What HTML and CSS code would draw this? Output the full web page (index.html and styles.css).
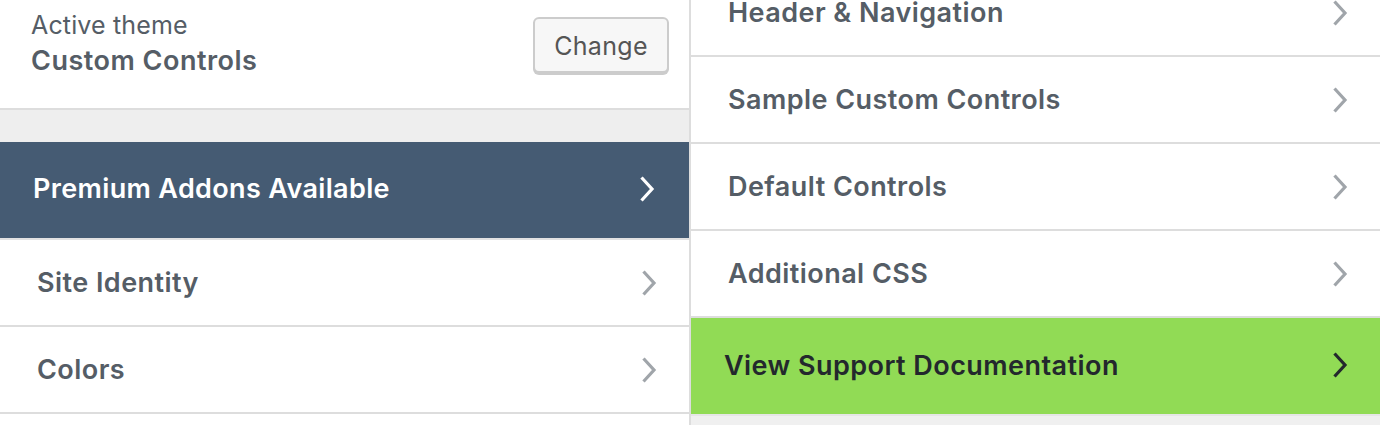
FILE: index.html
```html
<!DOCTYPE html>
<html lang="en">
<head>
<meta charset="utf-8">
<title>Customizer</title>
<link rel="stylesheet" href="styles.css">
</head>
<body>
<div class="screen">
  <div class="panel panel-left">
    <div class="theme">
      <div class="theme-info">
        <span class="theme-label">Active theme</span>
        <strong class="theme-name">Custom Controls</strong>
      </div>
      <button class="change-btn" type="button">Change</button>
    </div>
    <div class="spacer"></div>
    <ul class="sections">
      <li class="section section-premium">
        <span class="section-title">Premium Addons Available</span>
        <svg class="chev" width="18" height="28" viewBox="0 0 18 28"><polyline points="3.5,2.5 14,14 3.5,25.5" fill="none" stroke="currentColor" stroke-width="3.2"/></svg>
      </li>
      <li class="section">
        <span class="section-title">Site Identity</span>
        <svg class="chev" width="18" height="28" viewBox="0 0 18 28"><polyline points="3.5,2.5 14,14 3.5,25.5" fill="none" stroke="currentColor" stroke-width="3.2"/></svg>
      </li>
      <li class="section">
        <span class="section-title">Colors</span>
        <svg class="chev" width="18" height="28" viewBox="0 0 18 28"><polyline points="3.5,2.5 14,14 3.5,25.5" fill="none" stroke="currentColor" stroke-width="3.2"/></svg>
      </li>
    </ul>
  </div>
  <div class="panel panel-right">
    <ul class="sections sections-scrolled">
      <li class="section">
        <span class="section-title">Header &amp; Navigation</span>
        <svg class="chev" width="18" height="28" viewBox="0 0 18 28"><polyline points="3.5,2.5 14,14 3.5,25.5" fill="none" stroke="currentColor" stroke-width="3.2"/></svg>
      </li>
      <li class="section">
        <span class="section-title">Sample Custom Controls</span>
        <svg class="chev" width="18" height="28" viewBox="0 0 18 28"><polyline points="3.5,2.5 14,14 3.5,25.5" fill="none" stroke="currentColor" stroke-width="3.2"/></svg>
      </li>
      <li class="section">
        <span class="section-title">Default Controls</span>
        <svg class="chev" width="18" height="28" viewBox="0 0 18 28"><polyline points="3.5,2.5 14,14 3.5,25.5" fill="none" stroke="currentColor" stroke-width="3.2"/></svg>
      </li>
      <li class="section">
        <span class="section-title">Additional CSS</span>
        <svg class="chev" width="18" height="28" viewBox="0 0 18 28"><polyline points="3.5,2.5 14,14 3.5,25.5" fill="none" stroke="currentColor" stroke-width="3.2"/></svg>
      </li>
      <li class="section section-docs">
        <span class="section-title">View Support Documentation</span>
        <svg class="chev" width="18" height="28" viewBox="0 0 18 28"><polyline points="3.5,2.5 14,14 3.5,25.5" fill="none" stroke="currentColor" stroke-width="3.2"/></svg>
      </li>
    </ul>
  </div>
</div>
</body>
</html>
```

FILE: styles.css
```css
* {
  box-sizing: border-box;
}

html, body {
  margin: 0;
  padding: 0;
  height: 100%;
  overflow: hidden;
}

body {
  font-family: Inter, "Noto Sans", "Liberation Sans", sans-serif;
  color: #555d66;
  background: #ffffff;
}

.screen {
  display: flex;
  height: 425px;
}

.panel {
  display: flex;
  flex-direction: column;
  overflow: hidden;
}

.panel-left {
  width: 691px;
  flex: 0 0 691px;
  background: #ffffff;
  border-right: 2px solid #dddddd;
}

.panel-right {
  flex: 1 1 auto;
  background: #f0f0f0;
}

.theme {
  height: 110px;
  flex: 0 0 110px;
  display: flex;
  align-items: flex-start;
  justify-content: space-between;
  padding: 9px 20px 0 31px;
  border-bottom: 2px solid #dddddd;
  background: #ffffff;
}

.theme-info {
  display: flex;
  flex-direction: column;
}

.theme-label {
  font-size: 25px;
  line-height: 32px;
  font-weight: 400;
  letter-spacing: 0.15px;
  color: #555d66;
}

.theme-name {
  font-size: 27px;
  line-height: 40px;
  font-weight: 600;
  letter-spacing: 0.5px;
  color: #555d66;
}

.change-btn {
  margin-top: 8px;
  width: 136px;
  height: 56px;
  font-family: inherit;
  font-size: 25px;
  letter-spacing: 0.3px;
  color: #555555;
  background: #f7f7f7;
  border: 2px solid #cccccc;
  border-radius: 6px;
  box-shadow: 0 2px 0 #cccccc;
  padding: 2px 0 0;
}

.spacer {
  height: 32px;
  flex: 0 0 32px;
  background: #eeeeee;
}

.sections {
  list-style: none;
  margin: 0;
  padding: 0;
}

.sections-scrolled {
  margin-top: -30px;
}

.section {
  height: 87px;
  display: flex;
  align-items: center;
  justify-content: space-between;
  padding: 0 31px 0 37px;
  background: #ffffff;
  border-bottom: 2px solid #dddddd;
}

.section-title {
  font-size: 27px;
  font-weight: 600;
  color: #555d66;
  letter-spacing: 0.45px;
}

.chev {
  display: block;
  color: #a0a5aa;
}

.section-premium {
  height: 98px;
  padding: 0 33px 3px 33px;
  background: #455b73;
  border-bottom-color: #e2e2e2;
}

.section-premium .section-title {
  color: #ffffff;
  letter-spacing: 0.35px;
}

.section-premium .chev {
  color: #ffffff;
}

.section-docs {
  height: 98px;
  padding: 0 31px 2px 33px;
  background: #91db55;
  border-bottom: 2px solid #e6e6e6;
}

.section-docs .section-title {
  color: #23282d;
}

.section-docs .chev {
  color: #23282d;
}
```
